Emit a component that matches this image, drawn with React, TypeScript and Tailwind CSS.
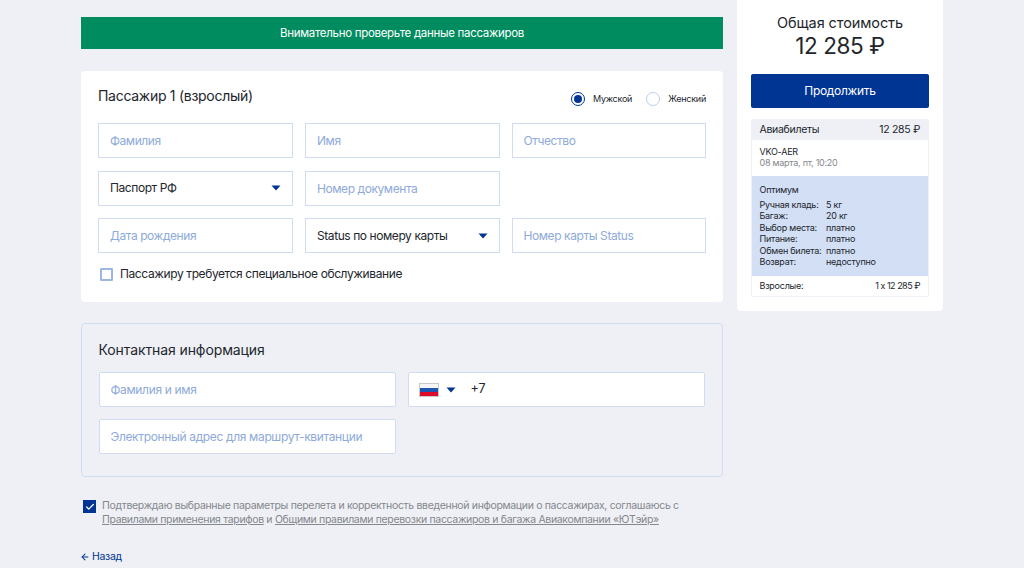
import { ArrowLeft, Check } from 'lucide-react'

const font = { fontFamily: 'Inter, "Noto Sans", sans-serif' }

function Field({ label }: { label: string }) {
  return (
    <div className="h-[35px] flex items-center px-[11px] pt-[1px] bg-white border-[1.5px] border-[#cfdcf2] text-[12px] tracking-[-0.42px] text-[#8eaadb]">
      {label}
    </div>
  )
}

function Caret() {
  return (
    <svg width="10" height="6" viewBox="0 0 10 6" className="shrink-0">
      <path d="M0.5 0.5h9L5 5.5z" fill="#003594" />
    </svg>
  )
}

function SelectField({ label }: { label: string }) {
  return (
    <div className="h-[35px] flex items-center justify-between px-[11px] bg-white border-[1.5px] border-[#cfdcf2] text-[12px] tracking-[-0.42px] text-[#22262c]">
      <span>{label}</span>
      <Caret />
    </div>
  )
}

function Radio({ label, checked }: { label: string; checked?: boolean }) {
  return (
    <div className="flex items-center gap-[8px]">
      <span
        className={
          checked
            ? 'w-[14px] h-[14px] rounded-full border-[1.5px] border-[#003594] flex items-center justify-center'
            : 'w-[14px] h-[14px] rounded-full border-[1.5px] border-[#bfd0ea]'
        }
      >
        {checked && <span className="w-[8px] h-[8px] rounded-full bg-[#003594]" />}
      </span>
      <span className="text-[9px] tracking-[-0.25px] text-[#22262c]">{label}</span>
    </div>
  )
}

const fare = [
  ['Ручная кладь:', '5 кг'],
  ['Багаж:', '20 кг'],
  ['Выбор места:', 'платно'],
  ['Питание:', 'платно'],
  ['Обмен билета:', 'платно'],
  ['Возврат:', 'недоступно'],
]

export default function App() {
  return (
    <div style={font} className="h-[568px] overflow-hidden bg-[#eef0f5] flex pl-[81px] gap-[14px] items-start">
      <div className="w-[642px] pt-[17px]">
        {/* Notice */}
        <div className="h-[32px] pt-[1px] bg-[#008c5e] flex items-center justify-center text-[11.5px] tracking-[-0.3px] text-white">
          Внимательно проверьте данные пассажиров
        </div>

        {/* Passenger */}
        <div className="mt-[22px] h-[231px] bg-white rounded-[4px] px-[17px]">
          <div className="h-[52px] flex items-center justify-between">
            <h2 className="-mt-[3px] text-[14px] tracking-[-0.28px] text-[#22262c]">Пассажир 1 (взрослый)</h2>
            <div className="flex gap-[14px] pt-[4px]">
              <Radio label="Мужской" checked />
              <Radio label="Женский" />
            </div>
          </div>
          <div className="grid grid-cols-[195px_194.5px_194.5px] gap-x-[12px] gap-y-[12.5px]">
            <Field label="Фамилия" />
            <Field label="Имя" />
            <Field label="Отчество" />
            <SelectField label="Паспорт РФ" />
            <Field label="Номер документа" />
            <div />
            <Field label="Дата рождения" />
            <SelectField label="Status по номеру карты" />
            <Field label="Номер карты Status" />
          </div>
          <div className="mt-[12px] ml-[2px] flex items-center gap-[7px]">
            <span className="w-[13px] h-[13px] rounded-[1px] border-2 border-[#9db8e0]" />
            <span className="text-[12px] tracking-[-0.4px] text-[#22262c]">Пассажиру требуется специальное обслуживание</span>
          </div>
        </div>

        {/* Contacts */}
        <div className="mt-[21px] h-[154px] rounded-[4px] border-[1.5px] border-[#cfdcf2] px-[16.5px]">
          <h2 className="h-[48px] pt-[3px] flex items-center text-[14px] tracking-[-0.1px] text-[#22262c]">Контактная информация</h2>
          <div className="grid grid-cols-[297px_297px] gap-x-[12px] gap-y-[12px]">
            <div className="h-[35px] flex items-center px-[11px] bg-white border-[1.5px] border-[#cfdcf2] rounded-[2px] text-[12px] tracking-[-0.35px] text-[#8eaadb]">
              Фамилия и имя
            </div>
            <div className="h-[35px] flex items-center pl-[10px] bg-white border-[1.5px] border-[#cfdcf2] rounded-[2px] text-[12.5px] text-[#22262c]">
              <svg width="20" height="14" viewBox="0 0 20 14" className="shrink-0">
                <rect width="20" height="14" fill="#c8c8c8" />
                <rect x="1" y="1" width="18" height="4" fill="#f5f5f5" />
                <rect x="1" y="5" width="18" height="4" fill="#1f56b0" />
                <rect x="1" y="9" width="18" height="4" fill="#dd0a2a" />
              </svg>
              <span className="ml-[7px] mr-[15px] flex"><Caret /></span>
              +7
            </div>
            <div className="h-[35px] flex items-center px-[11px] bg-white border-[1.5px] border-[#cfdcf2] rounded-[2px] text-[12px] tracking-[-0.35px] text-[#8eaadb]">
              Электронный адрес для маршрут-квитанции
            </div>
          </div>
        </div>

        {/* Consent */}
        <div className="mt-[22px] ml-[2px] flex gap-[6px]">
          <span className="mt-[1px] w-[13px] h-[13px] shrink-0 bg-[#003594] flex items-center justify-center">
            <Check size={10} strokeWidth={3} className="text-white" />
          </span>
          <p className="text-[10.5px] leading-[14px] tracking-[-0.33px] text-[#85878c]">
            Подтверждаю выбранные параметры перелета и корректность введенной информации о пассажирах, соглашаюсь с{' '}
            <br />
            <span className="underline">Правилами применения тарифов</span> и{' '}
            <span className="underline">Общими правилами перевозки пассажиров и багажа Авиакомпании «ЮТэйр»</span>
          </p>
        </div>

        <div className="mt-[22px] -ml-[1px] flex items-center gap-[2px] text-[10.5px] tracking-[-0.3px] text-[#003594]">
          <ArrowLeft size={10} strokeWidth={2.5} />
          Назад
        </div>
      </div>

      {/* Summary */}
      <div className="w-[206px] h-[311px] bg-white rounded-b-[4px] px-[14px]">
        <div className="pt-[14px] text-center text-[#22262c]">
          <div className="text-[14.5px] leading-[18px] tracking-[-0.1px]">Общая стоимость</div>
          <div className="text-[22.5px] leading-[28px] tracking-[-0.4px]">12 285 ₽</div>
        </div>
        <div className="mt-[14px] h-[34px] bg-[#003594] rounded-[2px] flex items-center justify-center text-[12px] tracking-[-0.3px] text-white">
          Продолжить
        </div>
        <div className="mt-[11px] h-[178px] border border-[#eef0f5] rounded-[2px] text-[#22262c] flex flex-col">
          <div className="h-[20px] shrink-0 bg-[#eef0f5] flex items-center justify-between pl-[7.5px] pr-[8px] text-[10.5px] tracking-[-0.3px]">
            <span>Авиабилеты</span>
            <span>12 285 ₽</span>
          </div>
          <div className="h-[36px] shrink-0 pl-[7.5px] pr-[8px] pt-[6px] text-[9px] leading-[11px] tracking-[-0.25px]">
            <div>VKO-AER</div>
            <div className="text-[#85878c]">08 марта, пт, 10:20</div>
          </div>
          <div className="h-[100px] shrink-0 bg-[#d2dff5] pl-[7.5px] pr-[8px] pt-[8px] text-[9px] leading-[11.5px] tracking-[-0.25px]">
            <div className="mb-[3px]">Оптимум</div>
            {fare.map(([k, v]) => (
              <div key={k} className="flex">
                <span className="w-[66.5px] shrink-0">{k}</span>
                <span>{v}</span>
              </div>
            ))}
          </div>
          <div className="flex-1 flex items-center justify-between pl-[7.5px] pr-[8px] text-[9px] tracking-[-0.25px]">
            <span>Взрослые:</span>
            <span className="tracking-[-0.5px] [font-feature-settings:'calt'_0]">1 x 12 285 ₽</span>
          </div>
        </div>
      </div>
    </div>
  )
}
